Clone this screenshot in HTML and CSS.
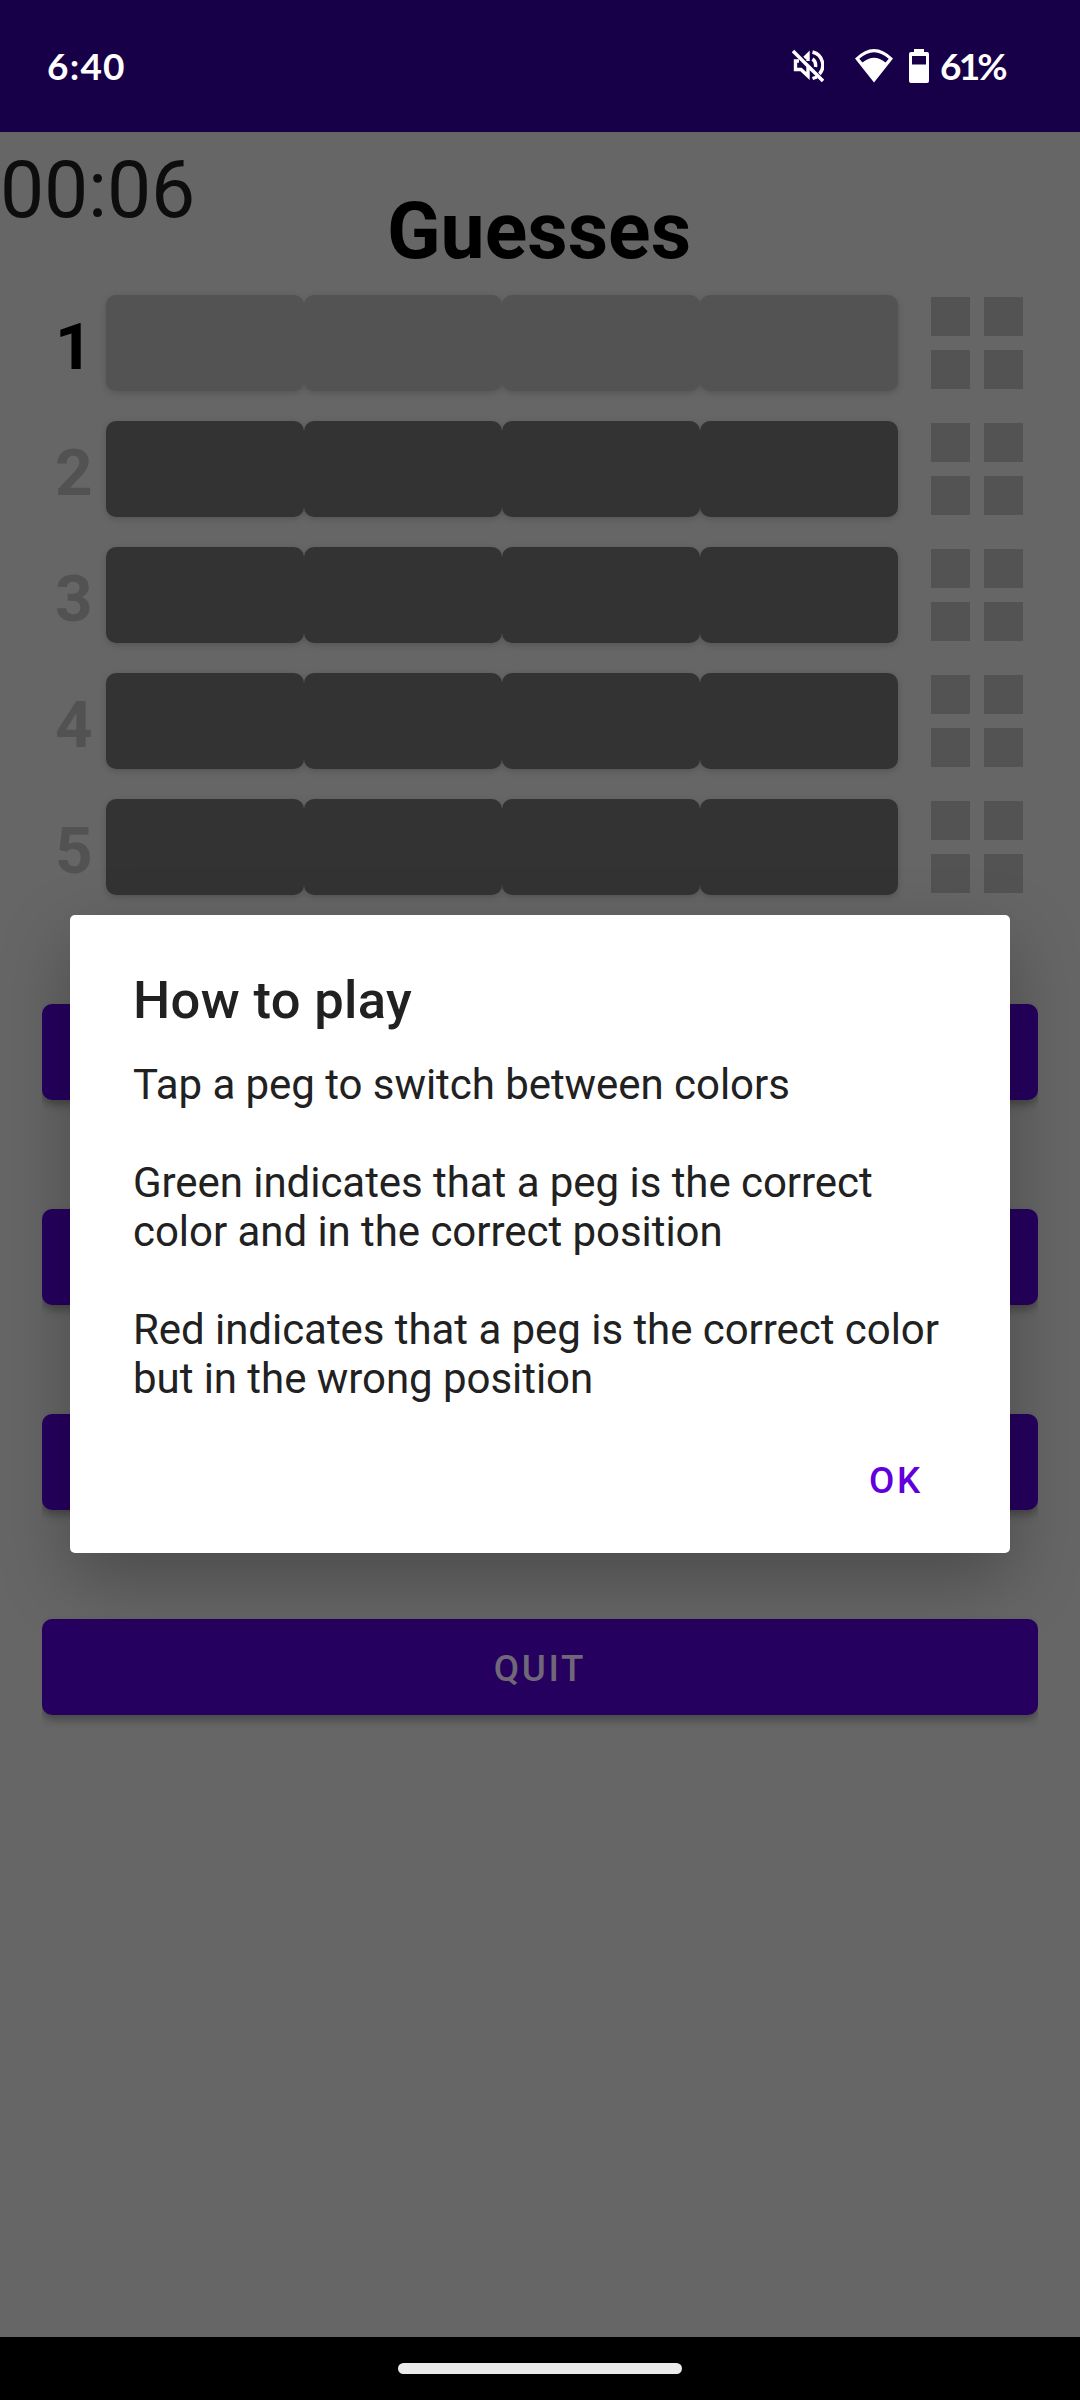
FILE: index.html
```html
<!DOCTYPE html>
<html lang="en">
<head>
<meta charset="utf-8">
<title>Guesses</title>
<link rel="stylesheet" href="styles.css">
</head>
<body>
<header class="status">
  <span class="clock">6:40</span>
  <svg class="mute" viewBox="0 0 32 34" fill="none" stroke="#fff" stroke-width="3.400"><path d="M1 2 31 32"/><path d="M7 12H3.500V20.500H9L16 27V18M12.500 9 16 5.500V12M20.500 3C32 6 33 19 27.500 25M20.500 10C23.500 12 24 15 23.500 18M20.500 29.500 25 28"/></svg>
  <svg class="wifi" viewBox="0 0 38 34"><path fill="#fff" fill-rule="evenodd" d="M0 9.500Q19-9.500 38 9.500L19 33.500ZM4.300 9.800 7.500 13.500Q19 4 30.500 13.500L33.700 9.800Q19-3.500 4.300 9.800Z"/></svg>
  <svg class="battery" viewBox="0 0 20 34"><path fill="#fff" fill-rule="evenodd" d="M5 0H15V3H18Q20 3 20 5V32Q20 34 18 34H2Q0 34 0 32V5Q0 3 2 3H5ZM3 7V15.500H17V7Z"/></svg>
  <span class="percent">61%</span>
</header>
<main class="game">
  <div class="timer">00:06</div>
  <h1 class="heading">Guesses</h1>
  <section class="board">
    <div class="row active"><span class="num">1</span><div class="pegs"><i></i><i></i><i></i><i></i></div><div class="hints"><i></i><i></i><i></i><i></i></div></div>
    <div class="row"><span class="num">2</span><div class="pegs"><i></i><i></i><i></i><i></i></div><div class="hints"><i></i><i></i><i></i><i></i></div></div>
    <div class="row"><span class="num">3</span><div class="pegs"><i></i><i></i><i></i><i></i></div><div class="hints"><i></i><i></i><i></i><i></i></div></div>
    <div class="row"><span class="num">4</span><div class="pegs"><i></i><i></i><i></i><i></i></div><div class="hints"><i></i><i></i><i></i><i></i></div></div>
    <div class="row"><span class="num">5</span><div class="pegs"><i></i><i></i><i></i><i></i></div><div class="hints"><i></i><i></i><i></i><i></i></div></div>
  </section>
  <div class="actions">
    <div class="button"></div>
    <div class="button"></div>
    <div class="button"></div>
    <div class="button">QUIT</div>
  </div>
</main>
<footer class="nav"><div class="pill"></div></footer>
<div class="dialog" role="dialog">
  <h2 class="title">How to play</h2>
  <div class="message">
    <p>Tap a peg to switch between colors</p>
    <p>Green indicates that a peg is the correct<br>color and in the correct position</p>
    <p>Red indicates that a peg is the correct color<br>but in the wrong position</p>
  </div>
  <div class="ok">OK</div>
</div>
</body>
</html>
```
FILE: styles.css
```css
* { box-sizing: border-box; }
body { margin: 0; width: 1080px; height: 2400px; display: flex; flex-direction: column; position: relative; overflow: hidden; background: #666; font-family: Roboto, sans-serif; }
.status { height: 132px; background: #180048; color: #fff; display: flex; align-items: center; padding: 0 75px 0 47px; font: 700 37px/44px Lato, sans-serif; }
.clock { letter-spacing: 1.2px; }
.mute { width: 32px; height: 34px; margin-left: auto; }
.wifi { width: 38px; height: 34px; margin-left: 31px; }
.battery { width: 20px; height: 34px; margin-left: 16px; }
.percent { margin-left: 11px; width: 65px; white-space: nowrap; letter-spacing: -2.800px; }
.game { flex: 1; display: flex; flex-direction: column; }
.timer { height: 56px; font-size: 78.75px; line-height: 92px; padding-top: 12px; color: #0d0d0d; letter-spacing: -.2px; }
.heading { margin: -3px 0 0; height: 110px; text-align: center; font-size: 78.75px; line-height: 92px; color: #000; padding-right: 2px; }
.board { display: flex; flex-direction: column; gap: 30px; }
.row { display: flex; height: 96px; align-items: center; }
.num { width: 106px; padding: 7px 0 0 55px; font-weight: 700; font-size: 65.625px; line-height: 96px; color: #525252; }
.active .num { color: #000; }
.pegs { display: flex; filter: drop-shadow(0 2px 3px rgba(0,0,0,.17)); }
.pegs i { width: 198px; height: 96px; border-radius: 10px; background: #333; }
.active .pegs i { background: #535353; }
.hints { display: grid; grid-template-columns: 39px 39px; gap: 14px; margin-left: 33px; }
.hints i { height: 39px; background: #535353; }
.actions { display: flex; flex-direction: column; gap: 109px; padding: 109px 42px 0; }
.button { height: 96px; border-radius: 10px; background: #26005f; color: #706778; text-align: center; font-weight: 500; font-size: 36.75px; line-height: 99px; letter-spacing: 2.7px; box-shadow: 0 5px 8px rgba(0,0,0,.3); clip-path: inset(-12px 0 -16px); }
.nav { height: 63px; background: #000; display: flex; justify-content: center; padding-top: 26px; }
.pill { width: 284px; height: 11px; border-radius: 6px; background: #ebebeb; }
.dialog { position: absolute; left: 70px; top: 915px; width: 940px; height: 638px; padding: 54px 63px 0; background: #fff; border-radius: 5px; color: #212121; box-shadow: 0 26px 70px rgba(0,0,0,.27); }
.title { margin: 0; font-size: 52.5px; line-height: 62px; font-weight: 500; letter-spacing: .35px; }
.message { display: flex; flex-direction: column; gap: 49px; margin-top: 29px; font-size: 42px; line-height: 49px; letter-spacing: -.05px; white-space: nowrap; }
.message p { margin: 0; }
.ok { margin-top: 56px; padding-right: 24px; text-align: right; font-weight: 500; font-size: 36.75px; line-height: 43px; letter-spacing: 2.7px; color: #6200dd; }
```
